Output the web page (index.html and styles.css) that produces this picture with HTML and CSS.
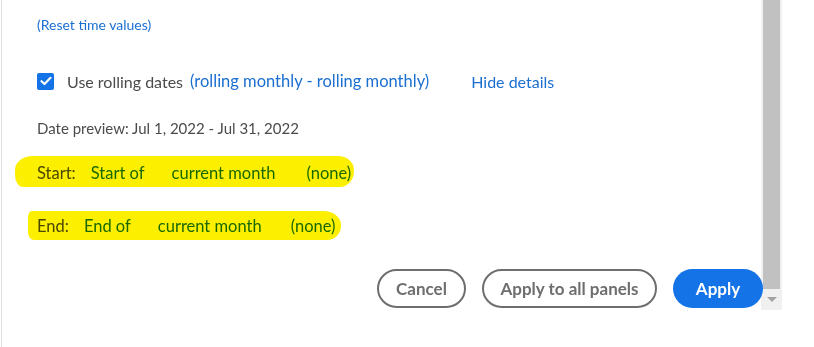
FILE: index.html
```html
<!DOCTYPE html>
<html lang="en">
<head>
    <meta charset="UTF-8">
    <title>Date range details</title>
    <link rel="stylesheet" href="styles.css">
</head>
<body>
    <div class="panel">
        <div class="content">
            <a class="reset-link" href="#">(Reset time values)</a>

            <div class="rolling-row">
                <span class="checkbox">
                    <svg width="12" height="10" viewBox="0 0 12 10"><path d="M1.5 5.2 L4.5 8 L10.5 1.8" fill="none" stroke="#fff" stroke-width="2.2" stroke-linecap="round" stroke-linejoin="round"/></svg>
                </span>
                <span class="rolling-label">Use rolling dates</span>
                <a class="link rolling-summary" href="#">(rolling monthly - rolling monthly)</a>
                <a class="link hide-details" href="#">Hide details</a>
            </div>

            <div class="preview">Date preview: Jul 1, 2022 - Jul 31, 2022</div>

            <div class="range-row start-row">
                <span class="range-label">Start:</span>
                <span class="range-value v1">Start of</span>
                <span class="range-value v2">current month</span>
                <span class="range-value">(none)</span>
            </div>

            <div class="range-row end-row">
                <span class="range-label">End:</span>
                <span class="range-value v1">End of</span>
                <span class="range-value v2">current month</span>
                <span class="range-value">(none)</span>
            </div>

            <div class="actions">
                <button class="btn btn-outline btn-cancel">Cancel</button>
                <button class="btn btn-outline btn-all">Apply to all panels</button>
                <button class="btn btn-primary">Apply</button>
            </div>
        </div>

        <div class="scrollbar">
            <div class="thumb"></div>
            <div class="arrow"></div>
        </div>
    </div>
</body>
</html>
```

FILE: styles.css
```css
* {
    margin: 0;
    padding: 0;
    box-sizing: border-box;
}

body {
    font-family: Lato, "Open Sans", sans-serif;
    background: white;
    color: #4b4b4b;
    width: 814px;
    height: 347px;
    overflow: hidden;
}

.panel {
    display: flex;
    height: 347px;
    margin-left: 1px;
    border-left: 1px solid #e1e1e1;
}

.content {
    flex: 1;
    padding-left: 35px;
    position: relative;
}

a {
    color: #1a6fd1;
    text-decoration: none;
}

.reset-link {
    display: block;
    margin-top: 16px;
    font-size: 14px;
    line-height: 18px;
}

.rolling-row {
    display: flex;
    align-items: center;
    margin-top: 36px;
    height: 22px;
    font-size: 16px;
}

.checkbox {
    width: 17px;
    height: 17px;
    border-radius: 2px;
    background: #1473e6;
    display: flex;
    align-items: center;
    justify-content: center;
    margin-right: 13px;
}

.rolling-label {
    margin-right: 7px;
}

.rolling-summary {
    font-size: 16.5px;
    margin-right: 42px;
}

.preview {
    margin-top: 26px;
    font-size: 15px;
    line-height: 20px;
}

.range-row {
    display: flex;
    position: relative;
    font-size: 16.5px;
    line-height: 20px;
}

.start-row {
    margin-top: 25px;
}

.end-row {
    margin-top: 33px;
}

.range-label {
    color: #4b4b4b;
    margin-right: 15px;
}

.range-value {
    color: #1a6fd1;
}

.start-row .v1 { margin-right: 27px; }
.start-row .v2 { margin-right: 31px; }
.end-row .range-label { margin-right: 15px; }
.end-row .v1 { margin-right: 27px; }
.end-row .v2 { margin-right: 29px; }

/* highlighter marks drawn over the rows */
.range-row::after {
    content: "";
    position: absolute;
    background: #fcf000;
    mix-blend-mode: multiply;
    pointer-events: none;
}

.start-row::after {
    left: -22px;
    top: -7px;
    width: 339px;
    height: 31px;
    border-radius: 18px 16px 14px 8px / 14px 14px 16px 12px;
}

.end-row::after {
    left: -9px;
    top: -5px;
    width: 313px;
    height: 29px;
    border-radius: 4px 18px 14px 6px / 6px 14px 14px 8px;
}

.actions {
    display: flex;
    justify-content: flex-end;
    gap: 16px;
    margin-top: 33px;
    margin-right: -2px;
}

.btn {
    font-family: inherit;
    font-size: 17px;
    font-weight: bold;
    height: 39px;
    border-radius: 20px;
    cursor: pointer;
}

.btn-outline {
    background: white;
    color: #6e6e6e;
    border: 2px solid #6e6e6e;
}

.btn-cancel {
    width: 89px;
}

.btn-all {
    width: 175px;
}

.btn-primary {
    width: 90px;
    background: #1473e6;
    border: none;
    color: white;
}

.scrollbar {
    width: 21px;
    height: 310px;
    margin-right: 32px;
    background: #f0f0f0;
    display: flex;
    flex-direction: column;
    align-items: center;
}

.thumb {
    width: 17px;
    height: 289px;
    background: #c1c1c1;
}

.arrow {
    margin-top: 8px;
    width: 0;
    height: 0;
    border-left: 5px solid transparent;
    border-right: 5px solid transparent;
    border-top: 5px solid #a3a3a3;
}
```
